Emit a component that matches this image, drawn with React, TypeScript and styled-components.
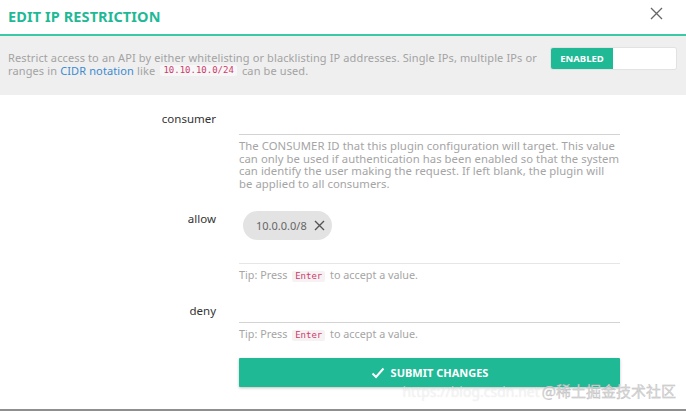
import styled, { createGlobalStyle } from "styled-components";

const teal = "#1fb996";

const GlobalStyle = createGlobalStyle`
  html, body {
    margin: 0;
    padding: 0;
    background: #fff;
  }
  body {
    font-family: "Noto Sans", "Liberation Sans", sans-serif;
  }
`;

export default function App() {
  return (
    <>
      <GlobalStyle />
      <Modal>
        <Header>
          <Title>EDIT IP RESTRICTION</Title>
          <CloseButton aria-label="close">
            <svg width="13" height="13" viewBox="0 0 13 13">
              <path d="M1 1L12 12M12 1L1 12" stroke="#666" strokeWidth="1.3" fill="none" />
            </svg>
          </CloseButton>
        </Header>

        <Banner>
          <BannerText>
            <Line>
              Restrict access to an API by either whitelisting or blacklisting IP addresses. Single IPs, multiple IPs or
            </Line>
            <Line>
              ranges in <Link>CIDR notation</Link> like <Code>10.10.10.0/24</Code> can be used.
            </Line>
          </BannerText>
          <Toggle>
            <ToggleOn>ENABLED</ToggleOn>
            <ToggleOff />
          </Toggle>
        </Banner>

        <Form>
          <Row $top={9}>
            <Label $lh={30}>consumer</Label>
            <Field>
              <TextInput $h={30} />
              <Help>
                The CONSUMER ID that this plugin configuration will target. This value can only be used if
                authentication has been enabled so that the system can identify the user making the request. If left
                blank, the plugin will be applied to all consumers.
              </Help>
            </Field>
          </Row>

          <Row $top={14}>
            <Label $lh={14} $pad={8}>allow</Label>
            <Field>
              <TagBox>
                <Chip>
                  10.0.0.0/8
                  <svg width="11" height="11" viewBox="0 0 11 11">
                    <path d="M1 1L10 10M10 1L1 10" stroke="#555" strokeWidth="1.4" fill="none" />
                  </svg>
                </Chip>
              </TagBox>
              <Tip>
                Tip: Press <Code $tip>Enter</Code> to accept a value.
              </Tip>
            </Field>
          </Row>

          <Row $top={14}>
            <Label $lh={30}>deny</Label>
            <Field>
              <TextInput $h={26} />
              <Tip>
                Tip: Press <Code $tip>Enter</Code> to accept a value.
              </Tip>
            </Field>
          </Row>

          <Row $top={17}>
            <span />
            <Submit>
              <svg width="14" height="12" viewBox="0 0 14 12">
                <path d="M1.5 6.5L5 10L12.5 1.5" stroke="#fff" strokeWidth="2" fill="none" />
              </svg>
              SUBMIT CHANGES
            </Submit>
          </Row>
        </Form>

        <Watermark>
          <span className="url">https://blog.csdn.net</span>
          <span className="brand">@稀土掘金技术社区</span>
        </Watermark>
      </Modal>
    </>
  );
}

const Modal = styled.div`
  position: relative;
  width: 686px;
  height: 409px;
  border-bottom: 2px solid #8f8f8f;
  background: #fff;
  overflow: hidden;
`;

const Header = styled.div`
  display: flex;
  align-items: center;
  justify-content: space-between;
  padding: 0 23px 0 8px;
  border-bottom: 2px solid #3ccaa6;
  box-sizing: border-box;
  height: 36px;
`;

const Title = styled.h1`
  margin: 0;
  font-size: 14.5px;
  font-weight: 700;
  color: ${teal};
  letter-spacing: 0.1px;
  padding-bottom: 2px;
`;

const CloseButton = styled.div`
  display: flex;
  padding-bottom: 8px;
`;

const Banner = styled.div`
  height: 59px;
  background: #efefef;
  display: flex;
  align-items: flex-start;
  justify-content: space-between;
  padding: 12px 10px 0 8px;
  box-sizing: border-box;
`;

const BannerText = styled.div`
  margin: 3px 0 0;
  width: 532px;
  display: flex;
  flex-direction: column;
  font-size: 11px;
  letter-spacing: 0.12px;
  color: #a3a3a3;
`;

const Line = styled.div`
  height: 13px;
  line-height: 13px;
  white-space: nowrap;
  display: flex;
  align-items: center;
  gap: 0.28em;
`;

const Link = styled.span`
  color: #3c8bd0;
`;

const Code = styled.code<{ $tip?: boolean }>`
  display: inline-block;
  font-family: "DejaVu Sans Mono", "Liberation Mono", monospace;
  font-size: 9px;
  line-height: 11px;
  letter-spacing: 0;
  color: #cf3a6b;
  background: ${(p) => (p.$tip ? "#f6f2f3" : "#f7f7f7")};
  padding: 0 3px;
  border-radius: 2px;
  margin: 0 2px;
`;

const Toggle = styled.div`
  display: flex;
  width: 125px;
  height: 21px;
  border-radius: 2px;
  overflow: hidden;
  box-shadow: 0 0 0 1px #e2e2e2;
`;

const ToggleOn = styled.div`
  width: 62px;
  background: ${teal};
  color: #fff;
  font-size: 9.5px;
  font-weight: 700;
  display: flex;
  align-items: center;
  justify-content: center;
`;

const ToggleOff = styled.div`
  flex: 1;
  background: #fff;
`;

const Form = styled.div`
  display: flex;
  flex-direction: column;
`;

const Row = styled.div<{ $top: number }>`
  display: grid;
  grid-template-columns: 216px 381px;
  column-gap: 23px;
  margin-top: ${(p) => p.$top}px;
`;

const Label = styled.div<{ $lh: number; $pad?: number }>`
  text-align: right;
  font-size: 11.5px;
  font-weight: 400;
  color: #333;
  line-height: ${(p) => p.$lh}px;
  padding-top: ${(p) => p.$pad ?? 0}px;
`;

const Field = styled.div`
  display: flex;
  flex-direction: column;
`;

const TextInput = styled.div<{ $h: number }>`
  height: ${(p) => p.$h}px;
  border-bottom: 1px solid #d3d3d3;
`;

const Help = styled.p`
  margin: 5px 0 0;
  font-size: 11.3px;
  letter-spacing: 0.05px;
  line-height: 12.6px;
  color: #a5a5a5;
`;

const TagBox = styled.div`
  height: 52px;
  padding: 7px 0 0 4px;
  border-bottom: 1px solid #e6e6e6;
`;

const Chip = styled.div`
  display: inline-flex;
  align-items: center;
  gap: 7px;
  height: 29px;
  padding: 0 7px 0 13px;
  border-radius: 15px;
  background: #e3e3e3;
  font-size: 11px;
  color: #666;
`;

const Tip = styled.p`
  margin: 4px 0 0;
  font-size: 10.8px;
  line-height: 13px;
  color: #a5a5a5;
`;

const Submit = styled.button`
  height: 29px;
  border: none;
  border-radius: 1px;
  background: ${teal};
  color: #fff;
  font-family: inherit;
  font-size: 11px;
  font-weight: 700;
  display: flex;
  align-items: center;
  justify-content: center;
  gap: 6px;
  box-shadow: 0 1px 3px rgba(0, 0, 0, 0.25);
`;

const Watermark = styled.div`
  position: absolute;
  right: 10px;
  bottom: 8px;
  display: flex;
  align-items: baseline;
  gap: 2px;
  pointer-events: none;

  .url {
    font-size: 14px;
    color: rgba(255, 255, 255, 0.55);
    text-shadow: 0 0 1px rgba(0, 0, 0, 0.12);
  }

  .brand {
    font-family: "Noto Sans CJK SC", sans-serif;
    font-size: 15px;
    color: #d8d8d8;
    -webkit-text-stroke: 0.3px #b8b8b8;
  }
`;
